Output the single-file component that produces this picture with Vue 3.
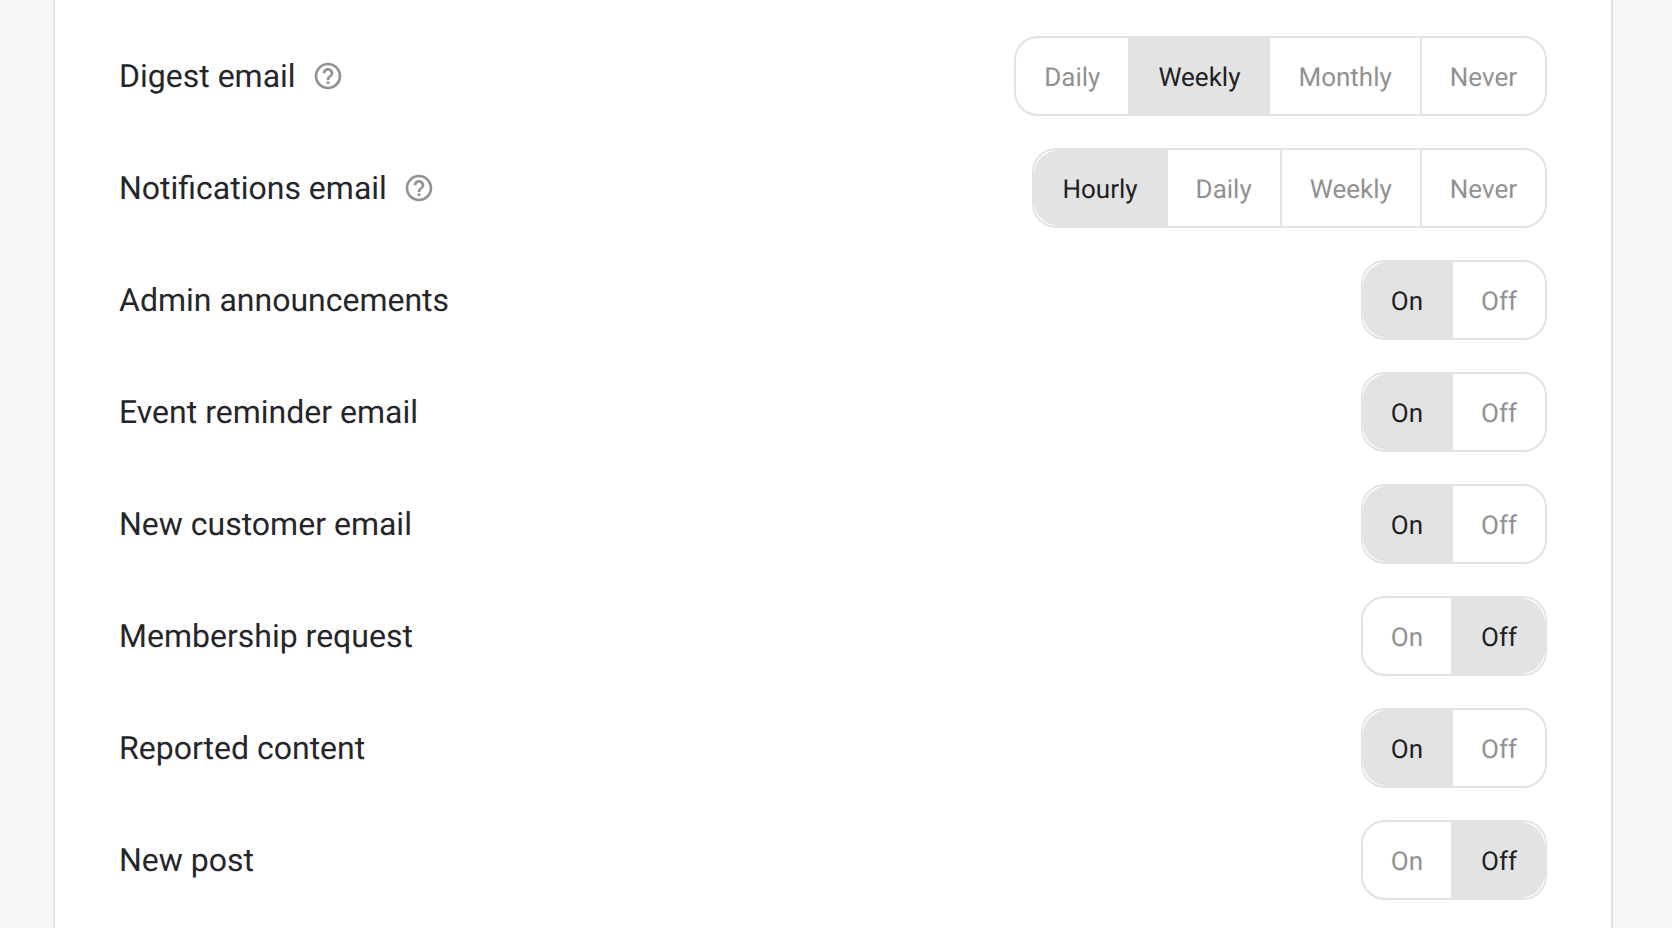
<script setup>
import { reactive } from "vue";

const rows = reactive([
  { label: "Digest email", help: true, options: ["Daily", "Weekly", "Monthly", "Never"], value: "Weekly" },
  { label: "Notifications email", help: true, options: ["Hourly", "Daily", "Weekly", "Never"], value: "Hourly" },
  { label: "Admin announcements", options: ["On", "Off"], value: "On" },
  { label: "Event reminder email", options: ["On", "Off"], value: "On" },
  { label: "New customer email", options: ["On", "Off"], value: "On" },
  { label: "Membership request", options: ["On", "Off"], value: "Off" },
  { label: "Reported content", options: ["On", "Off"], value: "On" },
  { label: "New post", options: ["On", "Off"], value: "Off" },
]);
</script>

<template>
  <div class="page">
    <div class="card">
      <div v-for="row in rows" :key="row.label" class="row">
        <div class="label">
          <span>{{ row.label }}</span>
          <svg v-if="row.help" class="help" viewBox="0 0 24 24" aria-hidden="true">
            <path
              d="M11 18h2v-2h-2v2zm1-16C6.48 2 2 6.48 2 12s4.48 10 10 10 10-4.48 10-10S17.52 2 12 2zm0 18c-4.41 0-8-3.59-8-8s3.59-8 8-8 8 3.59 8 8-3.59 8-8 8zm0-14c-2.21 0-4 1.79-4 4h2c0-1.1.9-2 2-2s2 .9 2 2c0 2-3 1.75-3 5h2c0-2.25 3-2.5 3-5 0-2.21-1.79-4-4-4z"
            />
          </svg>
        </div>
        <div class="group">
          <button
            v-for="opt in row.options"
            :key="opt"
            type="button"
            class="seg"
            :class="{ active: row.value === opt }"
            @click="row.value = opt"
          >
            {{ opt }}
          </button>
        </div>
      </div>
    </div>
  </div>
</template>

<style>
html,
body {
  margin: 0;
  background: #f7f6f4;
  overflow: hidden;
}
</style>

<style scoped>
.page {
  height: 928px;
  padding: 0 59px 0 53px;
  box-sizing: border-box;
  overflow: hidden;
  font-family: Roboto, "Liberation Sans", sans-serif;
  text-rendering: geometricPrecision;
}

.card {
  min-height: 100%;
  box-sizing: border-box;
  background: #fff;
  border-left: 2px solid #e3e3e3;
  border-right: 2px solid #e3e3e3;
  padding: 36px 64px;
  display: flex;
  flex-direction: column;
  gap: 32px;
}

.row {
  display: flex;
  align-items: center;
  justify-content: space-between;
  height: 80px;
  flex: none;
}

.label {
  display: flex;
  align-items: center;
  gap: 16px;
  font-size: 32px;
  color: #26262a;
}

.help {
  width: 32px;
  height: 32px;
  fill: #919191;
}

.group {
  display: flex;
  height: 80px;
}

.seg {
  height: 80px;
  margin: 0 0 0 -2px;
  padding: 4px 28px 0;
  border: 2px solid #e3e3e3;
  background: #fff;
  background-clip: padding-box;
  color: #919191;
  font-family: inherit;
  font-size: 26px;
  text-rendering: inherit;
  cursor: pointer;
}

.seg:first-child {
  margin-left: 0;
  border-radius: 24px 0 0 24px;
}

.seg:last-child {
  border-radius: 0 24px 24px 0;
}

.seg.active {
  color: #212125;
  position: relative;
  z-index: 0;
}

/* fill sits under the border with a rounder corner, leaves a thin white sliver */
.seg.active::before {
  content: "";
  position: absolute;
  inset: 0;
  z-index: -1;
  background: #e3e3e3;
}

.seg.active:first-child::before {
  border-radius: 25px 0 0 25px;
}

.seg.active:last-child::before {
  border-radius: 0 25px 25px 0;
}
</style>
